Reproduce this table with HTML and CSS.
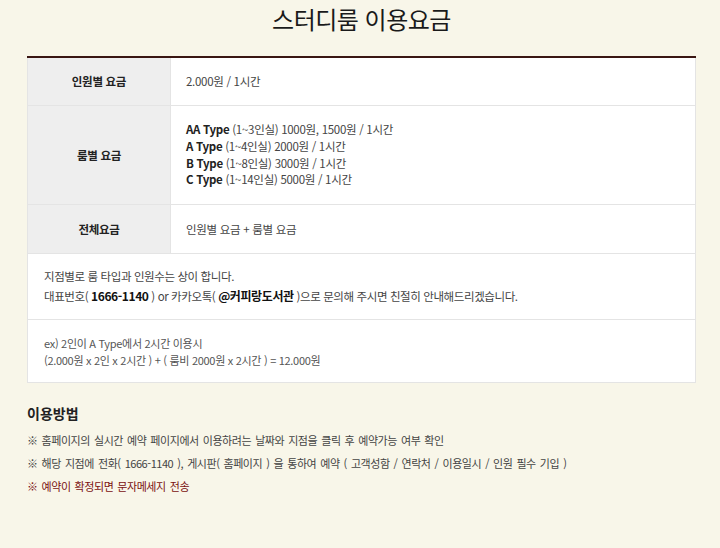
FILE: index.html
```html
<!DOCTYPE html>
<html lang="ko">
<head>
<meta charset="utf-8">
<link rel="stylesheet" href="styles.css">
</head>
<body>
<div class="page">
  <h1 class="title">스터디룸 이용요금</h1>
  <table class="fee">
    <tr class="r1">
      <th>인원별 요금</th>
      <td>2.000원 / 1시간</td>
    </tr>
    <tr class="r2">
      <th>룸별 요금</th>
      <td>
        <div class="ln"><b>AA Type</b> (1~3인실) 1000원, 1500원 / 1시간</div>
        <div class="ln"><b>A Type</b> (1~4인실) 2000원 / 1시간</div>
        <div class="ln"><b>B Type</b> (1~8인실) 3000원 / 1시간</div>
        <div class="ln"><b>C Type</b> (1~14인실) 5000원 / 1시간</div>
      </td>
    </tr>
    <tr class="r3">
      <th>전체요금</th>
      <td>인원별 요금 + 룸별 요금</td>
    </tr>
    <tr class="r4">
      <td colspan="2" class="note">
        <div>지점별로 룸 타입과 인원수는 상이 합니다.</div>
        <div>대표번호( <b>1666-1140</b> ) or 카카오톡( <b>@커피랑도서관</b> )으로 문의해 주시면 친절히 안내해드리겠습니다.</div>
      </td>
    </tr>
    <tr class="r5">
      <td colspan="2" class="ex">
        <div>ex) 2인이 A Type에서 2시간 이용시</div>
        <div>(2.000원 x 2인 x 2시간 ) + ( 룸비 2000원 x 2시간 ) = 12.000원</div>
      </td>
    </tr>
  </table>
  <h2 class="sub">이용방법</h2>
  <ul class="howto">
    <li>※ 홈페이지의 실시간 예약 페이지에서 이용하려는 날짜와 지점을 클릭 후 예약가능 여부 확인</li>
    <li>※ 해당 지점에 전화( 1666-1140 ), 게시판( 홈페이지 ) 을 통하여 예약 ( 고객성함 / 연락처 / 이용일시 / 인원 필수 기입 )</li>
    <li class="red">※ 예약이 확정되면 문자메세지 전송</li>
  </ul>
</div>
</body>
</html>
```
FILE: styles.css
```css
html, body {
  margin: 0;
  padding: 0;
  background: #f8f6e9;
}
body {
  font-family: "Noto Sans CJK KR", "Noto Sans", sans-serif;
  color: #333;
  width: 720px;
  height: 548px;
  overflow: hidden;
}
.page {
  padding: 0 24px 0 27px;
}
.title {
  margin: 0;
  padding-top: 1px;
  height: 55px;
  text-align: center;
  font-size: 24px;
  font-weight: 400;
  line-height: 36px;
  color: #1a1a1a;
  letter-spacing: -0.5px;
}
.fee {
  width: 669px;
  border-collapse: collapse;
  background: #fff;
  border-top: 2px solid #3a1612;
  font-size: 11.5px;
  letter-spacing: -0.3px;
}
.fee th, .fee td {
  border: 1px solid #e4e4e4;
  vertical-align: middle;
  padding: 0;
}
.fee th {
  width: 142px;
  background: #eeeeee;
  font-weight: 700;
  color: #222;
  text-align: center;
  font-size: 11.5px;
}
.fee td {
  padding-left: 15px;
  color: #444;
}
.fee td b {
  color: #222;
}
.r1 { height: 48px; }
.r2 { height: 99px; }
.r3 { height: 49px; }
.r4 { height: 66px; }
.r5 { height: 63px; }
.ln {
  line-height: 16.8px;
}
.fee td.note {
  padding-left: 16px;
  line-height: 19px;
  color: #444;
  letter-spacing: -0.4px;
}
.fee td.note b {
  font-size: 12px;
  color: #111;
}
.fee td.ex {
  padding-left: 16px;
  line-height: 17px;
  font-size: 11px;
  color: #555;
  padding-top: 3px;
}
.sub {
  margin: 20px 0 0;
  font-size: 14px;
  font-weight: 700;
  color: #222;
  line-height: 20px;
}
.howto {
  list-style: none;
  margin: 6px 0 0;
  padding: 0;
  font-size: 11px;
  color: #444;
  letter-spacing: -0.45px;
  word-spacing: 1.4px;
}
.howto li {
  line-height: 23px;
}
.howto li.red {
  color: #7a1010;
}
```
